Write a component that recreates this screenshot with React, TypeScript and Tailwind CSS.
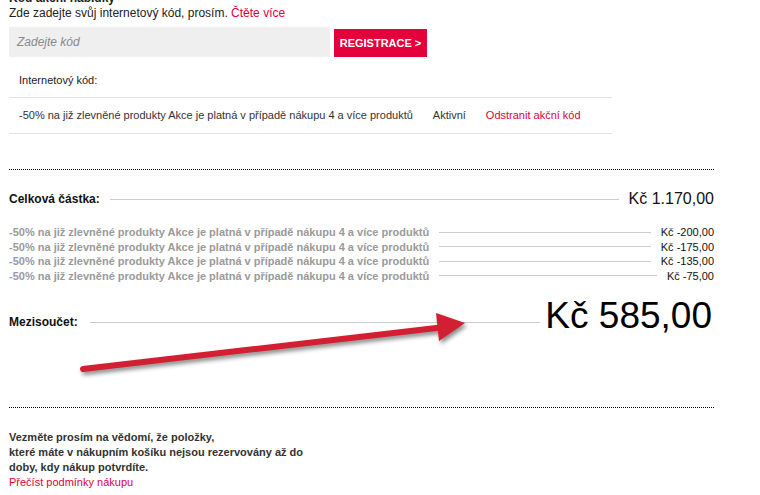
import React from "react";

export default function App() {
  const discounts = ["-200,00", "-175,00", "-135,00", "-75,00"];
  const promo = "-50% na již zlevněné produkty Akce je platná v případě nákupu 4 a více produktů";
  return (
    <div className="relative w-[760px] h-[495px] overflow-hidden bg-white pl-[9px] font-['Liberation_Sans',Arial,sans-serif] text-[#222]">
      <div className="w-[705px]">
        <div className="-mt-[9px] text-[12px] leading-[14px] font-bold text-[#222]">Kód akční nabídky</div>
        <div className="mt-[1px] text-[12px] leading-[14px] text-[#222]">
          Zde zadejte svůj internetový kód, prosím. <span className="text-[#e2003c]">Čtěte více</span>
        </div>
        <div className="mt-[7px] flex items-end gap-[4px]">
          <div className="w-[321px] h-[30px] bg-[#efefef] flex items-center pl-[8px] text-[12px] italic text-[#8a8a8a]">
            Zadejte kód
          </div>
          <div className="w-[93px] h-[28px] bg-[#e4003b] flex items-center justify-center text-[11px] font-bold text-white">
            REGISTRACE &gt;
          </div>
        </div>
        <div className="w-[603px]">
          <div className="h-[40px] flex items-center pl-[10px] pt-[6px] text-[11px] text-[#222]">Internetový kód:</div>
          <div className="h-[37px] border-t border-b border-[#e3e3e3] flex items-center pl-[10px] text-[11px] text-[#333]">
            <span>{promo}</span>
            <span className="ml-[20px]">Aktivní</span>
            <span className="ml-[20px] text-[#e2003c]">Odstranit akční kód</span>
          </div>
        </div>
        <div className="mt-[35px] border-t border-dotted border-black" />
        <div className="mt-[20px] flex items-center">
          <span className="text-[12px] font-bold text-[#111]">Celková částka:</span>
          <div className="flex-1 mx-[10px] h-px bg-[#cccccc]" />
          <span className="text-[16px] leading-[18px] text-[#111]">Kč 1.170,00</span>
        </div>
        <div className="mt-[17px]">
          {discounts.map((d) => (
            <div key={d} className="flex items-center h-[14.5px]">
              <span className="text-[11px] font-bold text-[#9a9a9a] whitespace-nowrap">{promo}</span>
              <div className="flex-1 mx-[10px] h-px bg-[#cccccc]" />
              <span className="text-[11px] text-[#111]">Kč {d}</span>
            </div>
          ))}
        </div>
        <div className="mt-[13px] flex items-center">
          <div className="flex-1 flex items-center pt-[12px]">
            <span className="text-[12px] font-bold text-[#111]">Mezisoučet:</span>
            <div className="flex-1 ml-[12px] mr-[5px] h-px bg-[#cccccc]" />
          </div>
          <span className="text-[37px] leading-[40px] text-black mr-[2px]">Kč 585,00</span>
        </div>
        <div className="mt-[71px] border-t border-dotted border-black" />
        <div className="mt-[22px] text-[11px] leading-[15px] font-bold text-[#333]">
          <div>Vezměte prosím na vědomí, že položky,</div>
          <div>které máte v nákupním košíku nejsou rezervovány až do</div>
          <div>doby, kdy nákup potvrdíte.</div>
          <div className="font-normal text-[#e2003c]">Přečíst podmínky nákupu</div>
        </div>
      </div>
      <svg
        className="absolute left-0 top-0 pointer-events-none drop-shadow-[2px_3px_2px_rgba(0,0,0,0.45)]"
        width="760"
        height="495"
        viewBox="0 0 760 495"
      >
        <line x1="83" y1="369" x2="445" y2="327" stroke="#d21f31" strokeWidth="6" strokeLinecap="round" />
        <polygon points="436,313 465,323 439,341" fill="#d21f31" />
      </svg>
    </div>
  );
}
